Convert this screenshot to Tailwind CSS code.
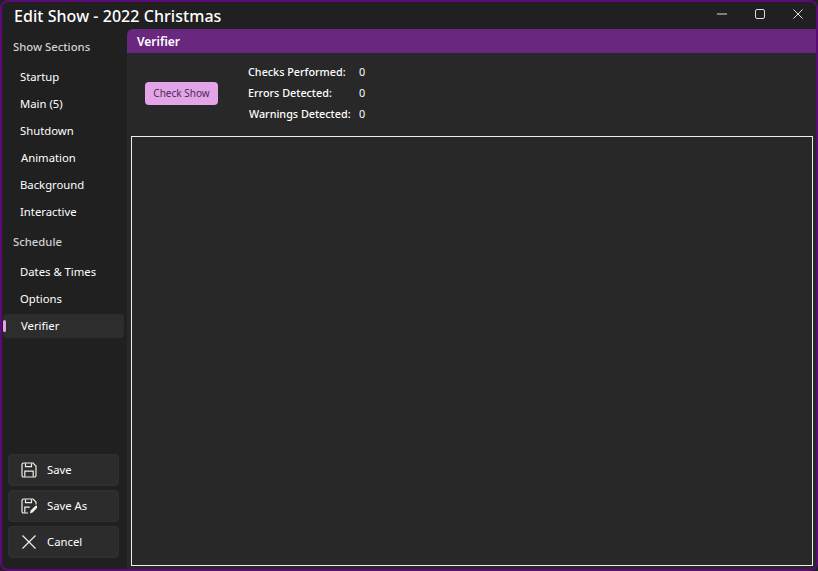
<!DOCTYPE html>
<html><head><meta charset="utf-8"><script src="https://cdn.jsdelivr.net/npm/@tailwindcss/browser@4"></script></head>
<body class="bg-[#1f1f1f]">
<div class="w-[818px] h-[571px] flex flex-col overflow-hidden bg-[#202020] border-2 border-[#5c0a78] rounded-[8px] font-['Noto_Sans',sans-serif] text-white">
  <header class="h-[27px] flex items-center shrink-0">
    <h1 class="ml-[12px] text-[16px] font-medium tracking-[0.05px] leading-none">Edit Show - 2022 Christmas</h1>
    <div class="ml-auto flex items-center gap-[2px] pb-[3px]">
      <button class="w-[36px] h-[24px] flex items-center justify-center"><svg width="10" height="10" viewBox="0 0 10 10"><path d="M0 5h10" stroke="#ddd" stroke-width="1"/></svg></button>
      <button class="w-[36px] h-[24px] flex items-center justify-center pr-[1px]"><svg width="10" height="10" viewBox="0 0 10 10"><rect x=".5" y=".5" width="9" height="9" rx="1.5" fill="none" stroke="#ddd"/></svg></button>
      <button class="w-[36px] h-[24px] flex items-center justify-center"><svg width="10" height="10" viewBox="0 0 10 10"><path d="M.5.5l9 9M9.5.5l-9 9" stroke="#ddd" stroke-width="1"/></svg></button>
    </div>
  </header>
  <div class="flex flex-1 min-h-0">
    <aside class="w-[125px] shrink-0 flex flex-col text-[11.3px]">
      <div class="h-[37.5px] pl-[11px] flex items-center font-medium text-[#d0d0d0] pt-[2px] mt-[-1px]">Show Sections</div>
      <nav class="flex flex-col gap-[3px] pl-[1px] pr-[3px]">
        <a class="h-[24px] flex items-center pl-[17px]">Startup</a>
        <a class="h-[24px] flex items-center pl-[17px]">Main (5)</a>
        <a class="h-[24px] flex items-center pl-[17px]">Shutdown</a>
        <a class="h-[24px] flex items-center pl-[18px]">Animation</a>
        <a class="h-[24px] flex items-center pl-[17px]">Background</a>
        <a class="h-[24px] flex items-center pl-[17px]">Interactive</a>
      </nav>
      <div class="h-[36px] pl-[11px] flex items-center font-medium text-[#d0d0d0]">Schedule</div>
      <nav class="flex flex-col gap-[3px] pl-[1px] pr-[3px]">
        <a class="h-[24px] flex items-center pl-[17px]">Dates &amp; Times</a>
        <a class="h-[24px] flex items-center pl-[17px]">Options</a>
        <a class="relative h-[24px] flex items-center pl-[18px] pt-[1px] bg-[#2d2d2d] rounded-[4px] mt-[-1px]"><span class="absolute left-0 top-[6px] w-[3px] h-[12px] rounded-full bg-[#e3a5e8]"></span>Verifier</a>
      </nav>
      <div class="mt-auto mb-[11px] ml-[6px] mr-[8px] flex flex-col gap-[4px]">
        <button class="h-[32px] flex items-center bg-[#2c2c2c] border border-[#303030] rounded-[4px] pl-[12px] gap-[10px]"><svg width="16" height="16" viewBox="0 0 16 16" fill="none" stroke="#eee" stroke-width="1.2"><path d="M2.6 1h9.4L15 4v9.4a1.6 1.6 0 0 1-1.6 1.6H2.6A1.6 1.6 0 0 1 1 13.4V2.6A1.6 1.6 0 0 1 2.6 1z"/><path d="M4.5 1.2v3.4h6V1.2M3.8 14.8V9.2h8.4v5.600"/></svg><span>Save</span></button>
        <button class="h-[32px] flex items-center bg-[#2c2c2c] border border-[#303030] rounded-[4px] pl-[12px] gap-[10px]"><svg width="16" height="16" viewBox="0 0 16 16" fill="none" stroke="#eee" stroke-width="1.2"><path d="M7 15H2.6A1.6 1.6 0 0 1 1 13.4V2.6A1.6 1.6 0 0 1 2.6 1h9.4L15 4v2.5"/><path d="M4.5 1.2v3.4h6V1.2M3.8 14.8V9.2h5"/><path d="M9 15.5l.6-3 4.6-4.6a1.3 1.3 0 0 1 2 2l-4.600 4.600z" fill="#eee" stroke="none"/></svg><span>Save As</span></button>
        <button class="h-[32px] flex items-center bg-[#2c2c2c] border border-[#303030] rounded-[4px] pl-[12px] gap-[10px]"><svg width="16" height="16" viewBox="0 0 16 16" fill="none" stroke="#eee" stroke-width="1.2"><path d="M1.500 1.500l13 13M14.500 1.500l-13 13"/></svg><span>Cancel</span></button>
      </div>
    </aside>
    <main class="flex-1 min-w-0 flex flex-col bg-[#282828] rounded-tl-[6px] overflow-hidden">
      <h2 class="h-[24px] shrink-0 bg-[#6a277f] pl-[10px] pt-[1px] flex items-center text-[12px] font-semibold">Verifier</h2>
      <section class="h-[83px] shrink-0 flex items-center pl-[18px] pb-[2px]">
        <button class="w-[73px] h-[23px] bg-[#e3a5e8] rounded-[4px] text-[10px] text-[#4a2a52] mt-[-1px]">Check Show</button>
        <dl class="ml-[30px] grid grid-cols-[111px_auto] auto-rows-[21px] items-center text-[10.8px] font-medium">
          <dt>Checks Performed:</dt><dd class="font-normal">0</dd>
          <dt>Errors Detected:</dt><dd class="font-normal">0</dd>
          <dt class="pl-[1px]">Warnings Detected:</dt><dd class="font-normal">0</dd>
        </dl>
      </section>
      <div class="flex-1 ml-[4px] mr-[3px] mb-[3px] border border-[#eeeeee]"></div>
    </main>
  </div>
</div>
</body></html>
